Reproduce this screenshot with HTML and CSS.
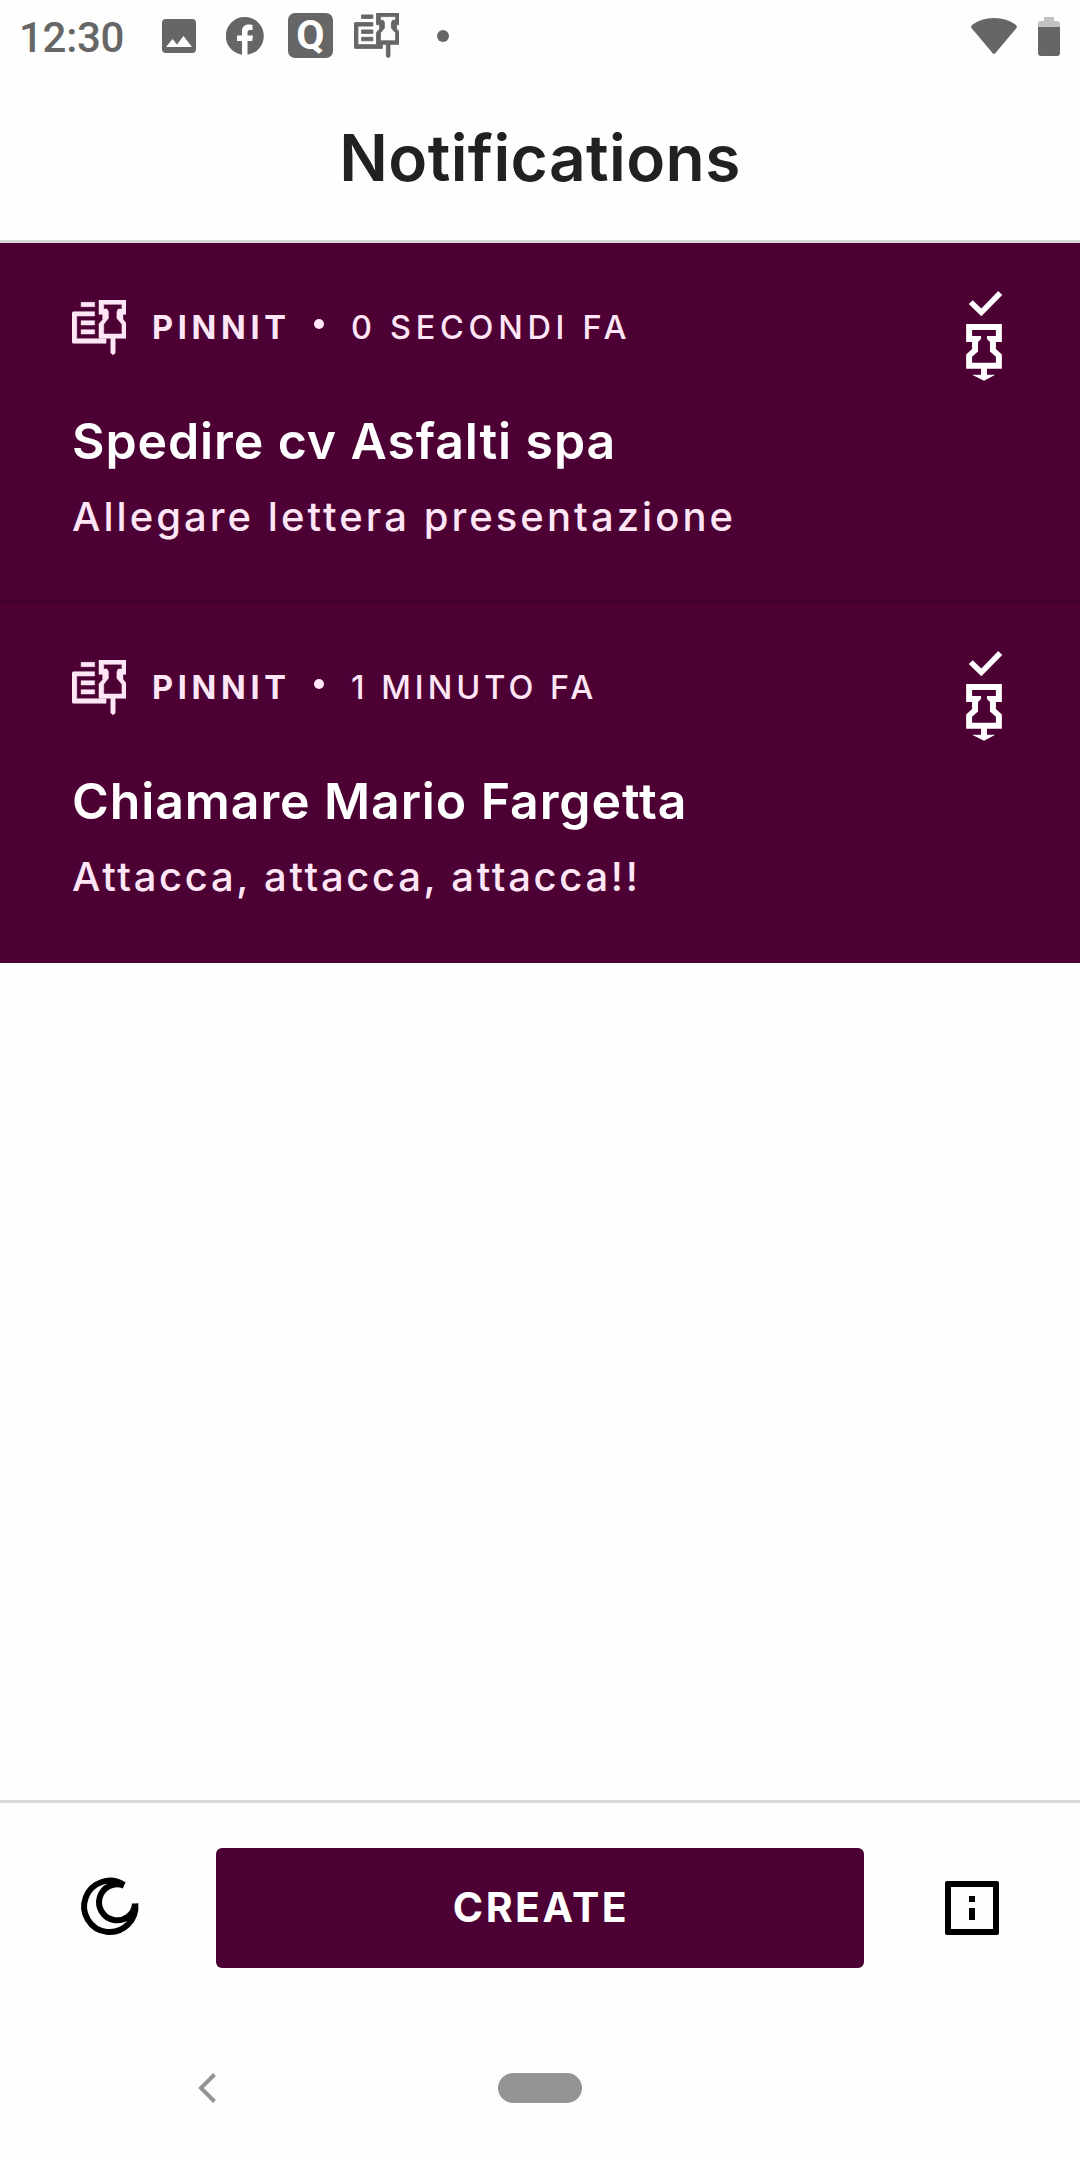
FILE: index.html
```html
<!DOCTYPE html>
<html lang="it">
<head>
    <meta charset="UTF-8">
    <meta name="viewport" content="width=device-width, initial-scale=1.0">
    <title>Notifications</title>
    <link rel="stylesheet" href="styles.css">
</head>
<body>
    <!-- shared icons -->
    <svg class="defs" width="0" height="0">
        <symbol id="pinnit" viewBox="12 17 160 165" preserveAspectRatio="none">
            <path d="M39 24H79V37H39ZM39 79H79V92H39ZM39 106H79V119H39ZM79 52V65H26V133H113V147H17Q12 147 12 142V57Q12 52 17 52Z"/>
            <path fill-rule="evenodd" d="M92 17H172V60H163V75L172 86V132H140V176L134 182L127 176V132H92V88L103 76V60H92ZM106 30V44H116L120 52V72L106 90V119H160V90L145 72V52L149 44H160V30Z"/>
        </symbol>
        <symbol id="unpin" viewBox="78 62 108 272">
            <path d="M98 90L124 115L175 62L187 74L124 138L86 101Z"/>
            <path fill-rule="evenodd" d="M78 162H186V216H168V237L186 254V297H141V315H166L132 333L96 315H123V297H78V254L96 237V216H78ZM96 180V198H123V207L114 216V245L96 261V279H168V261L150 245V216L141 207V198H168V180Z"/>
        </symbol>
    </svg>

    <div class="status-bar">
        <span class="clock">12:30</span>
        <svg class="status-photo" viewBox="0 0 34 34"><path fill-rule="evenodd" d="M4 0H30Q34 0 34 4V30Q34 34 30 34H4Q0 34 0 30V4Q0 0 4 0ZM4 28H30L21.5 17L15 25.500L10.500 20Z"/></svg>
        <svg class="status-fb" viewBox="0 0 38 38"><path d="M19 0A19 19 0 0 0 16 37.800V24H11V18.500H16V14.500C16 9.500 19 7.500 22.500 7.500C24.500 7.500 26.500 7.800 26.500 7.800V13H24C22 13 21.500 14 21.500 15.500V18.500H27L26.200 24H21.500V37.800A19 19 0 0 0 19 0Z"/></svg>
        <span class="status-q">Q</span>
        <svg class="status-pinnit"><use href="#pinnit"/></svg>
        <span class="status-more"></span>
        <svg class="wifi" viewBox="0 0 46 36"><path d="M1 7Q10 0 23 0Q36 0 45 7Q46.500 8.500 45.500 10L24.500 35Q23 37 21.500 35L.5 10Q-.5 8.500 1 7Z"/></svg>
        <svg class="battery" viewBox="0 0 22 39"><path fill="#c1c1c1" d="M6 0H16V4H19Q22 4 22 7V10H0V7Q0 4 3 4H6Z"/><path d="M0 10H22V36Q22 39 19 39H3Q0 39 0 36Z"/></svg>
    </div>

    <header class="header">
        <h1>Notifications</h1>
    </header>

    <main class="list">
        <article class="card">
            <div class="card-text">
                <div class="meta">
                    <svg class="app-icon"><use href="#pinnit"/></svg>
                    <span class="app-name">PINNIT</span>
                    <span class="dot"></span>
                    <span class="time time-seconds">0 SECONDI FA</span>
                </div>
                <h2 class="title">Spedire cv Asfalti spa</h2>
                <p class="content">Allegare lettera presentazione</p>
            </div>
            <svg class="unpin"><use href="#unpin"/></svg>
        </article>
        <article class="card">
            <div class="card-text">
                <div class="meta">
                    <svg class="app-icon"><use href="#pinnit"/></svg>
                    <span class="app-name">PINNIT</span>
                    <span class="dot"></span>
                    <span class="time">1 MINUTO FA</span>
                </div>
                <h2 class="title">Chiamare Mario Fargetta</h2>
                <p class="content content-short">Attacca, attacca, attacca!!</p>
            </div>
            <svg class="unpin"><use href="#unpin"/></svg>
        </article>
    </main>

    <footer class="bottom-bar">
        <svg class="bar-icon" viewBox="36 276 216 216">
            <path fill="none" stroke="#000" stroke-width="18" d="M192 315A77 77 0 1 0 226 371M192 317A54 54 0 1 0 225 371"/>
            <path d="M234 371Q234 402 212 429L195 421Q217 403 217 371Z"/>
        </svg>
        <button class="create">CREATE</button>
        <svg class="bar-icon" viewBox="0 0 24 24">
            <path fill-rule="evenodd" d="M3.600 3H20.400Q21 3 21 3.600V20.400Q21 21 20.400 21H3.600Q3 21 3 20.400V3.600Q3 3 3.600 3ZM5 5V19H19V5ZM11 8H13V10H11ZM11 12H13V16H11Z"/>
        </svg>
    </footer>

    <nav class="system-nav">
        <svg class="back" viewBox="0 0 18 30"><path d="M16.500 1.500L3 15L16.500 28.500" fill="none" stroke="#949494" stroke-width="4"/></svg>
        <span class="home"></span>
    </nav>
</body>
</html>
```
FILE: styles.css
```css
* {
    box-sizing: border-box;
}

body {
    margin: 0;
    height: 2160px;
    display: flex;
    flex-direction: column;
    background: #fefefe;
    color: #212121;
    font-family: Inter, "Open Sans", sans-serif;
    overflow: hidden;
}

h1, h2, p {
    margin: 0;
    white-space: nowrap;
}

svg {
    display: block;
    flex: none;
}

.defs {
    position: absolute;
}

/* status bar */
.status-bar {
    display: flex;
    align-items: center;
    height: 72px;
    padding: 0 20px 0 19px;
    color: #666;
    fill: #666;
}

.clock {
    width: 143px;
    padding-top: 3px;
    font: 500 42px/1 Roboto, sans-serif;
    letter-spacing: -0.3px;
}

.status-photo {
    width: 34px;
    height: 34px;
    margin-right: 30px;
}

.status-fb {
    width: 38px;
    height: 38px;
    margin-right: 24px;
}

.status-q {
    width: 45px;
    height: 45px;
    margin-right: 21px;
    border-radius: 7px;
    background: #666;
    color: #fff;
    font: 700 41px/44px Roboto, sans-serif;
    text-align: center;
}

.status-pinnit {
    width: 45px;
    height: 45px;
    margin-right: 38px;
    stroke: #666;
    stroke-width: 3px;
}

.status-q, .status-pinnit {
    margin-bottom: 1px;
}

.status-more {
    width: 12px;
    height: 12px;
    border-radius: 50%;
    background: #666;
}

.wifi {
    width: 46px;
    height: 36px;
    margin-left: auto;
    margin-right: 21px;
}

.battery {
    width: 22px;
    height: 39px;
}

/* header */
.header {
    height: 171px;
    padding-top: 45px;
    border-bottom: 3px solid #d8d8d8;
}

h1 {
    font-size: 64px;
    font-weight: 600;
    line-height: 81px;
    letter-spacing: 0.4px;
    text-align: center;
}

/* notifications */
.list {
    flex: 1;
}

.card {
    display: flex;
    justify-content: space-between;
    height: 360px;
    padding: 48px 78px 0 72px;
    background: #4d0034;
    border-bottom: 3px solid #46002f;
}

.card:last-child {
    border-bottom-color: #4d0034;
}

.card-text {
    padding-top: 9px;
}

.meta {
    display: flex;
    align-items: center;
    height: 55px;
    color: #ffe6f7;
    font-size: 32.5px;
    line-height: 55px;
    white-space: nowrap;
}

.app-icon {
    width: 54px;
    height: 55px;
    fill: #ffe6f7;
    stroke: #ffe6f7;
    stroke-width: 1.5px;
}

.app-name {
    width: 162px;
    margin-left: 26px;
    font-weight: 700;
    letter-spacing: 4.7px;
}

.dot {
    width: 10px;
    height: 10px;
    margin: 0 27px 8px 0;
    border-radius: 50%;
    background: #ffe6f7;
}

.time {
    font-weight: 500;
    letter-spacing: 4px;
}

.time-seconds {
    letter-spacing: 4.7px;
}

.title {
    margin-top: 56px;
    color: #fff;
    font-size: 50px;
    font-weight: 600;
    line-height: 60px;
    letter-spacing: 0.9px;
}

.content {
    margin-top: 22px;
    color: #ffe6f7;
    font-size: 40px;
    font-weight: 500;
    line-height: 48px;
    letter-spacing: 3.05px;
}

.content-short {
    letter-spacing: 2.65px;
}

.unpin {
    width: 36px;
    height: 90px;
    fill: #fff;
}

/* bottom bar */
.bottom-bar {
    display: flex;
    justify-content: space-between;
    align-items: center;
    height: 213px;
    padding: 0 72px;
    border-top: 3px solid #d8d8d8;
}

.bar-icon {
    width: 72px;
    height: 72px;
}

.create {
    width: 648px;
    height: 120px;
    padding: 0 0 1px 2px;
    border: none;
    border-radius: 6px;
    background: #4d0034;
    color: #fff;
    font: 700 41px/1 Inter, sans-serif;
    letter-spacing: 2.5px;
}

/* system navigation */
.system-nav {
    display: flex;
    align-items: center;
    height: 147px;
    padding: 3px 0 0 198px;
}

.back {
    width: 18px;
    height: 30px;
}

.home {
    width: 84px;
    height: 30px;
    margin-left: 282px;
    border-radius: 15px;
    background: #949494;
}
```
